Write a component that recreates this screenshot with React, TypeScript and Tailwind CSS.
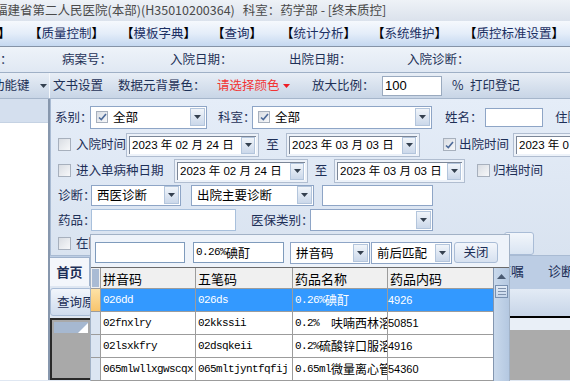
import React from "react";

const UI = "font-['Microsoft_YaHei','Noto_Sans_CJK_SC',sans-serif]";
const DATE = "font-['Liberation_Sans','Noto_Sans_CJK_SC',sans-serif] text-[11.5px] whitespace-pre";

// SimSun-like mix: latin runs in a narrow mono, CJK runs in the CJK face
function Song({ text }: { text: string }) {
  const parts = text.split(/([\u3000-\u9fff]+)/).filter((p) => p !== "");
  return (
    <>
      {parts.map((p, i) =>
        /[\u3000-\u9fff]/.test(p) ? (
          <span key={i} className="font-['Noto_Sans_CJK_SC',sans-serif] text-[12px]">
            {p}
          </span>
        ) : (
          <span key={i} className="font-['Liberation_Mono',monospace] text-[11px] tracking-[-0.6px] whitespace-pre">
            {p}
          </span>
        )
      )}
    </>
  );
}

function Arrow({ red }: { red?: boolean }) {
  return (
    <svg width="7" height="4" viewBox="0 0 7 4">
      <path d="M0 0H7L3.5 4Z" fill={red ? "#ee1c25" : "#34404f"} />
    </svg>
  );
}

function DropBtn({ tall }: { tall?: boolean }) {
  return (
    <span
      className={
        (tall ? "h-[17px] w-[14px] " : "h-[18px] w-[15px] ") +
        "flex shrink-0 items-center justify-center border border-[#b3c5dc] bg-linear-to-b from-[#f1f5fa] to-[#cbd8ea]"
      }
    >
      <Arrow />
    </span>
  );
}

function Check({ checked, small }: { checked?: boolean; small?: boolean }) {
  return (
    <span
      className={
        (small ? "h-[12px] w-[12px] " : "h-[13px] w-[13px] ") +
        "flex shrink-0 items-center justify-center border border-[#a7b0bd] bg-linear-to-br from-[#d9dde3] to-[#f7f8fa]"
      }
    >
      {checked && (
        <svg width="9" height="8" viewBox="0 0 9 8">
          <path d="M1 4.5L3.3 6.6L8 1" stroke="#4d6a99" strokeWidth="1.6" fill="none" />
        </svg>
      )}
    </span>
  );
}

function DateBox({ text, w }: { text: string; w: string }) {
  return (
    <div className={w + " h-[24px] shrink-0 border border-[#b0bdd0] bg-[#edf2f9] p-[2px]"}>
      <div className="flex h-full items-center border-l border-t border-[#7b8697] bg-white pl-[2px] pr-[1px]">
        <span className={DATE + " flex-1 overflow-hidden text-black"}>{text}</span>
        <DropBtn tall />
      </div>
    </div>
  );
}

function Select({ text, w, check }: { text: string; w: string; check?: boolean }) {
  return (
    <div className={w + " flex h-full shrink-0 items-center border border-[#8ea5c6] bg-white pr-[1px]"}>
      {check && (
        <span className="ml-[5px]">
          <Check checked small />
        </span>
      )}
      <span className="ml-[5px] flex-1 whitespace-nowrap text-[12.5px] text-black">{text}</span>
      <DropBtn />
    </div>
  );
}

const menu = [
  { cls: "w-[35px]", t: "" },
  { cls: "w-[92px]", t: "质量控制" },
  { cls: "w-[91px]", t: "模板字典" },
  { cls: "w-[69px]", t: "查询" },
  { cls: "w-[91px]", t: "统计分析" },
  { cls: "w-[92px]", t: "系统维护" },
  { cls: "w-[100px]", t: "质控标准设置" },
];

const rows = [
  ["026dd", "026ds", "0.26%碘酊", "4926"],
  ["02fnxlry", "02kkssii", "0.2%  呋喃西林溶液", "50851"],
  ["02lsxkfry", "02dsqkeii", "0.2%硫酸锌口服溶液", "4916"],
  ["065mlwllxgwscqx", "065mltjyntfqfij", "0.65ml微量离心管", "54360"],
];

export default function App() {
  return (
    <div className={UI + " relative h-[381px] w-[570px] overflow-hidden bg-[#dfe7f2] text-[12px] text-[#1d2f57]"}>
      {/* title */}
      <div className="flex h-[21px] items-center whitespace-nowrap bg-linear-to-b from-[#eef2f7] to-[#dbe2ec] text-[12.5px] text-[#4a4a4a]">
        <span className="-ml-[5px]">福建省第二人民医院(本部)(H35010200364)</span>
        <span className="ml-[8px]">科室：药学部 - [终末质控]</span>
      </div>

      {/* menu */}
      <div className="flex h-[26px] items-center border-b border-[#8593a7] bg-linear-to-b from-[#f6f9fd] via-[#e4edf9] to-[#c5d8f0] text-[12.5px]">
        {menu.map((m, i) => (
          <div key={i} className={m.cls + " flex shrink-0 items-center whitespace-nowrap"}>
            {i === 0 ? (
              <span className="-ml-[2px] font-bold text-black">】</span>
            ) : (
              <span className="-ml-[6px] flex items-center">
                <span className="font-bold text-black">【</span>
                <span className="text-[#1b2f63]">{m.t}</span>
                <span className="font-bold text-black">】</span>
              </span>
            )}
          </div>
        ))}
      </div>

      {/* info bar */}
      <div className="flex h-[26px] items-center whitespace-nowrap border-b border-[#9fb0c6] bg-linear-to-b from-[#eef3f9] to-[#e0e8f3] text-[12.5px] text-[#1e3157]">
        <span className="w-[62px]">：</span>
        <span className="w-[108px]">病案号：</span>
        <span className="w-[119px]">入院日期：</span>
        <span className="w-[118px]">出院日期：</span>
        <span>入院诊断：</span>
      </div>

      {/* toolbar */}
      <div className="flex h-[26px] items-center whitespace-nowrap border-b border-[#a6b6cb] bg-linear-to-b from-[#e8eef6] to-[#c8d5e6] text-[12.5px] text-[#1e3157]">
        <div className="flex h-full w-[50px] shrink-0 items-center border-r border-[#f4f7fb]">
          <span className="-ml-[8px]">功能键</span>
          <span className="ml-[10px]">
            <Arrow />
          </span>
        </div>
        <span className="ml-[3px] w-[65px]">文书设置</span>
        <span className="w-[99px]">数据元背景色：</span>
        <span className="w-[66px] text-[#f23434]">请选择颜色</span>
        <span className="w-[29px]">
          <Arrow red />
        </span>
        <span className="w-[70px]">放大比例：</span>
        <div className="flex h-[20px] w-[60px] items-center border border-[#9aaabf] bg-white pl-[2px] font-['Liberation_Sans',sans-serif] text-[13px] text-black">
          100
        </div>
        <span className="ml-[10px] w-[18px]">%</span>
        <span>打印登记</span>
      </div>

      {/* body */}
      <div className="flex h-[281px]">
        <div className="flex w-[50px] shrink-0 flex-col border-r-2 border-[#8797ad]">
          <div className="h-[24px] border-b border-[#c5d2e3] bg-[#d4dfee]" />
          <div className="flex-1 bg-white" />
        </div>

        <div className="flex flex-1 flex-col">
          {/* query panel */}
          <div className="flex h-[157px] flex-col border-b border-l border-[#a9bbd3] bg-linear-to-b from-[#e5edf8] to-[#d9e3f0] text-[12.5px] text-[#1d2f57]">
            <div className="mt-[7px] flex h-[23px] items-center whitespace-nowrap">
              <span className="ml-[4px] w-[35px]">系别：</span>
              <Select text="全部" w="w-[117px]" check />
              <span className="ml-[11px] w-[34px]">科室：</span>
              <Select text="全部" w="w-[180px]" check />
              <span className="ml-[13px] w-[40px]">姓名：</span>
              <div className="h-[19px] w-[58px] border border-[#8ea5c6] bg-white" />
              <span className="ml-[12px]">住院</span>
            </div>

            <div className="mt-[4px] flex h-[24px] items-center whitespace-nowrap">
              <span className="ml-[7px]">
                <Check />
              </span>
              <span className="ml-[5px] w-[50px]">入院时间</span>
              <DateBox text="2023 年 02 月 24 日" w="w-[133px]" />
              <span className="flex h-[24px] w-[27px] shrink-0 items-center justify-center">至</span>
              <DateBox text="2023 年 03 月 03 日" w="w-[134px]" />
              <span className="ml-[23px]">
                <Check checked />
              </span>
              <span className="ml-[3px] w-[54px]">出院时间</span>
              <DateBox text="2023 年 0" w="w-[80px]" />
            </div>

            <div className="mt-[2px] flex h-[24px] items-center whitespace-nowrap">
              <span className="ml-[7px]">
                <Check />
              </span>
              <span className="ml-[5px] w-[98px]">进入单病种日期</span>
              <DateBox text="2023 年 02 月 24 日" w="w-[134px]" />
              <span className="flex h-[24px] w-[26px] shrink-0 items-center justify-center">至</span>
              <DateBox text="2023 年 03 月 03 日" w="w-[131px]" />
              <span className="ml-[12px]">
                <Check />
              </span>
              <span className="ml-[3px]">归档时间</span>
            </div>

            <div className="mt-[2px] flex h-[22px] items-center whitespace-nowrap">
              <span className="ml-[7px] w-[33px]">诊断：</span>
              <Select text="西医诊断" w="w-[90px]" />
              <span className="w-[10px]" />
              <Select text="出院主要诊断" w="w-[123px]" />
              <div className="ml-[8px] h-full w-[111px] border border-[#8ea5c6] bg-white" />
            </div>

            <div className="mt-[3px] flex h-[22px] items-center whitespace-nowrap">
              <span className="ml-[7px] w-[33px]">药品：</span>
              <div className="h-full w-[145px] border border-[#a8c0dc] bg-white" />
              <span className="ml-[15px] w-[59px]">医保类别：</span>
              <Select text="" w="w-[123px]" />
            </div>

            <div className="mt-[1px] flex h-[23px] items-center whitespace-nowrap">
              <span className="ml-[7px]">
                <Check />
              </span>
              <span className="ml-[5px]">在院</span>
              <div className="ml-[403px] h-[23px] w-[30px] rounded-[3px] border border-[#a9bcd6] bg-linear-to-b from-[#f2f6fb] to-[#d9e4f2]" />
            </div>
          </div>

          {/* tab strip */}
          <div className="flex h-[30px] items-end whitespace-nowrap bg-[#bccde4] text-[13px] text-[#1d2f57]">
            <div className="flex h-[29px] w-[40px] shrink-0 items-center justify-center border-r border-t border-[#9fb2cc] bg-[#f3f6fb] font-bold">
              首页
            </div>
            <span className="mb-[6px] ml-[408px]">医嘱</span>
            <span className="mb-[6px] ml-[24px]">诊断</span>
          </div>

          {/* lower area */}
          <div className="flex flex-1">
            <div className="flex w-[42px] shrink-0 flex-col">
              <div className="mt-[2px] flex h-[28px] items-center overflow-hidden whitespace-nowrap rounded-[3px] border border-[#a9bcd6] bg-linear-to-b from-[#f1f5fb] to-[#cfdcee] pl-[6px] text-[12.5px]">
                查询原
              </div>
              <div className="mt-[2px] flex flex-1 flex-col border-2 border-[#2a2a2a] bg-[#a9a9a9]">
                <div className="m-[2px] flex h-[11px] items-end justify-end bg-[#a6b8d0]">
                  <svg width="10" height="10" viewBox="0 0 10 10">
                    <path d="M10 0V10H0Z" fill="#ffffff" />
                  </svg>
                </div>
              </div>
            </div>
            <div className="flex flex-1 flex-col">
              <div className="h-[3px] bg-[#bccde4]" />
              <div className="h-[27px] bg-linear-to-b from-[#e3ebf5] to-[#c7d5e8]" />
              <div className="h-[2px] bg-black" />
              <div className="h-[12px] bg-[#e9eff7]" />
              <div className="flex-1 bg-[#ababab]" />
            </div>
          </div>
        </div>
      </div>

      {/* lookup popup */}
      <div className="absolute left-[90px] top-[234px] flex h-[147px] w-[420px] flex-col border-l border-r border-t border-[#a2b2c6] bg-[#eef3fa]">
        <div className="flex h-[35px] items-start pt-[7px]">
          <div className="ml-[4px] h-[21px] w-[90px] border border-[#7f9bbc] bg-white" />
          <div className="ml-[8px] flex h-[21px] w-[91px] items-center whitespace-nowrap border border-[#7f9bbc] bg-white pl-[2px] text-black">
            <Song text="0.26%碘酊" />
          </div>
          <div className="ml-[6px] h-[22px]">
            <Select text="拼音码" w="w-[80px]" />
          </div>
          <div className="ml-[1px] h-[22px]">
            <Select text="前后匹配" w="w-[81px]" />
          </div>
          <div className="ml-[2px] flex h-[21px] w-[44px] items-center justify-center rounded-[3px] border border-[#a9bcd6] bg-linear-to-b from-[#f3f6fb] to-[#d6e1f0] text-[12.5px] text-[#1d2f57]">
            关闭
          </div>
        </div>

        <div className="flex flex-1 border-t border-[#6a6a6a] bg-white">
          <div className="flex w-[402px] flex-col">
            <div className="flex h-[21px] border-b border-[#9c9c9c] bg-[#f0f0f0] text-[13px] text-black">
              <div className="w-[10px] border-r border-[#9c9c9c] p-[1px]">
                <div className="h-full bg-[#a9bbd4]" />
              </div>
              <div className="flex w-[95px] items-end border-r border-[#9c9c9c] pl-[2px]">拼音码</div>
              <div className="flex w-[97px] items-end border-r border-[#9c9c9c] pl-[2px]">五笔码</div>
              <div className="flex w-[95px] items-end border-r border-[#9c9c9c] pl-[2px]">药品名称</div>
              <div className="flex flex-1 items-end pl-[2px]">药品内码</div>
            </div>
            {rows.map((r, i) => (
              <div
                key={i}
                className={
                  (i === 0 ? "bg-[#3399ff] text-white " : "bg-white text-black ") +
                  "flex h-[23px] shrink-0 border-b border-[#9c9c9c]"
                }
              >
                <div
                  className={
                    (i === 0 ? "bg-linear-to-b from-[#fde2a6] to-[#f8c46c] " : "bg-[#dbe5f2] ") +
                    "w-[10px] border-r border-[#9c9c9c]"
                  }
                />
                <div className="flex w-[95px] items-center overflow-hidden whitespace-nowrap border-r border-[#9c9c9c] pl-[2px]">
                  <Song text={r[0]} />
                </div>
                <div className="flex w-[97px] items-center overflow-hidden whitespace-nowrap border-r border-[#9c9c9c] pl-[2px]">
                  <Song text={r[1]} />
                </div>
                <div className="flex w-[95px] items-center overflow-hidden whitespace-nowrap border-r border-[#9c9c9c] pl-[2px]">
                  <Song text={r[2]} />
                </div>
                <div className="flex flex-1 items-center font-['Liberation_Sans',sans-serif] text-[11px]">{r[3]}</div>
              </div>
            ))}
          </div>

          {/* scrollbar */}
          <div className="flex w-[16px] flex-col border-l border-[#8396b0] bg-linear-to-r from-[#c9d9ec] to-[#b4c8e1]">
            <div className="flex h-[17px] items-center justify-center">
              <svg width="9" height="5" viewBox="0 0 9 5">
                <path d="M0 5H9L4.5 0Z" fill="#4a5a72" />
              </svg>
            </div>
            <div className="mx-[1px] flex h-[13px] flex-col items-center justify-center gap-[2px] border border-[#7890b0] bg-linear-to-b from-[#e3ecf7] to-[#c5d5ea]">
              <div className="h-px w-[8px] bg-[#7f92ad]" />
              <div className="h-px w-[8px] bg-[#7f92ad]" />
              <div className="h-px w-[8px] bg-[#7f92ad]" />
            </div>
          </div>
        </div>
      </div>
    </div>
  );
}
